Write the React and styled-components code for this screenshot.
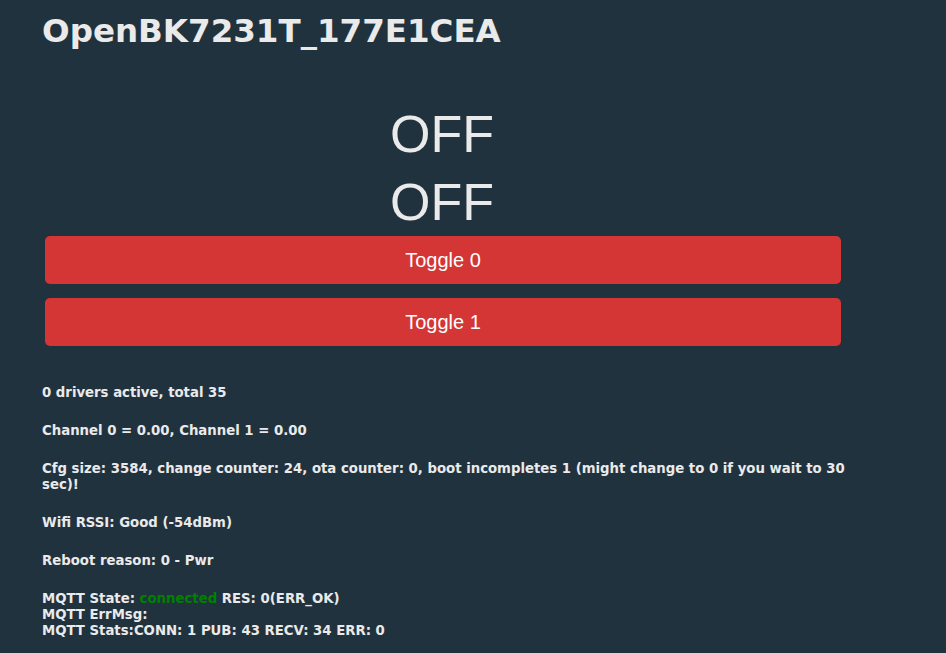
import React from "react";
import styled, { createGlobalStyle } from "styled-components";

const GlobalStyle = createGlobalStyle`
  html, body {
    margin: 0;
    background: #21323f;
  }
  body {
    color: #eaeaea;
    font-family: "DejaVu Sans", Verdana, sans-serif;
  }
`;

const Page = styled.div`
  width: 808px;
  padding-left: 42px;
`;

const Title = styled.h1`
  margin: 13px 0 0;
  font-size: 32.5px;
  line-height: 37px;
  font-weight: bold;
`;

const States = styled.div`
  width: 800px;
  margin-top: 50px;
  text-align: center;
  font-family: "Liberation Sans", Arial, sans-serif;
  font-size: 52px;
  line-height: 68px;
`;

const Buttons = styled.div`
  width: 796px;
  display: flex;
  flex-direction: column;
  gap: 14px;
  padding-left: 3px;
`;

const ToggleButton = styled.button`
  height: 48px;
  border: none;
  border-radius: 5px;
  background: ${(p) => p.$color || "#d43535"};
  color: #ffffff;
  font-family: "Liberation Sans", Arial, sans-serif;
  font-size: 20px;
  cursor: pointer;
`;

const Info = styled.div`
  margin-top: 39px;
`;

const InfoLine = styled.h5`
  margin: 0 0 22px;
  font-size: 13.28px;
  line-height: 16px;
  font-weight: bold;
`;

const Good = styled.span`
  color: #008000;
`;

const channels = ["OFF", "OFF"];

export default function App() {
  return (
    <>
      <GlobalStyle />
      <Page>
        <Title>OpenBK7231T_177E1CEA</Title>
        <States>
          {channels.map((s, i) => (
            <div key={i}>{s}</div>
          ))}
        </States>
        <Buttons>
          {channels.map((_, i) => (
            <ToggleButton key={i}>Toggle {i}</ToggleButton>
          ))}
        </Buttons>
        <Info>
          <InfoLine>0 drivers active, total 35</InfoLine>
          <InfoLine>Channel 0 = 0.00, Channel 1 = 0.00</InfoLine>
          <InfoLine>
            Cfg size: 3584, change counter: 24, ota counter: 0, boot incompletes 1
            (might change to 0 if you wait to 30 sec)!
          </InfoLine>
          <InfoLine>Wifi RSSI: Good (-54dBm)</InfoLine>
          <InfoLine>Reboot reason: 0 - Pwr</InfoLine>
          <InfoLine>
            MQTT State: <Good>connected</Good> RES: 0(ERR_OK)
            <br />
            MQTT ErrMsg:
            <br />
            MQTT Stats:CONN: 1 PUB: 43 RECV: 34 ERR: 0
          </InfoLine>
        </Info>
      </Page>
    </>
  );
}
